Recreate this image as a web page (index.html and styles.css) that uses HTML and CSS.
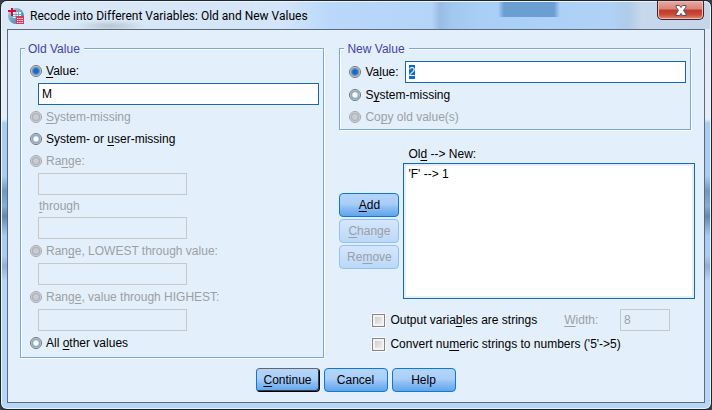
FILE: index.html
```html
<!DOCTYPE html>
<html lang="en">
<head>
<meta charset="utf-8">
<title>Recode into Different Variables: Old and New Values</title>
<link rel="stylesheet" href="styles.css">
</head>
<body>
<main class="window">
  <header class="titlebar">
    <svg class="app-icon" viewBox="0 0 16 16" aria-hidden="true">
      <defs><linearGradient id="globe" x1="0" y1="0" x2="1" y2="1"><stop offset="0" stop-color="#b9d3e8"/><stop offset="1" stop-color="#2f6da8"/></linearGradient></defs>
      <circle cx="8" cy="8" r="8" fill="url(#globe)"/>
      <path d="M5 4h8v6H5z" fill="#eef5fb"/>
      <path d="M5 6.500h8M5 8.500h8M8 4v6M10.500 4v6" stroke="#5f94c4" stroke-width=".8"/>
      <path d="M4 0v8M0 3h8" stroke="#d0103a" stroke-width="2"/>
      <path d="M8 8h8v8H8z" fill="#d03a5c"/>
      <path d="M9 10.500h6M9 12.500h6M9 14.500h6" stroke="#fff" stroke-dasharray="1.300 1"/>
    </svg>
    <h1 class="title">Recode into Different Variables: Old and New Values</h1>
    <button class="close" type="button" aria-label="Close">
      <svg viewBox="0 0 12 11" aria-hidden="true"><path d="M1 .5h3.500L6 2.500 7.500.5H11V2L8.500 5.500 11 9v1.500H7.500L6 8.500l-1.500 2H1V9l2.500-3.500L1 2z" fill="#f8f8f8" stroke="#4d5068"/></svg>
    </button>
  </header>
  <form class="client">
    <div class="columns">
      <fieldset class="group old">
        <legend>Old Value</legend>
        <label class="row"><input type="radio" name="old" checked><span><u>V</u>alue:</span></label>
        <input class="field" type="text" value="M" aria-label="Old value">
        <label class="row off"><input type="radio" name="old" disabled><span><u>S</u>ystem-missing</span></label>
        <label class="row"><input type="radio" name="old"><span>System- or <u>u</u>ser-missing</span></label>
        <label class="row off"><input type="radio" name="old" disabled><span>Ra<u>n</u>ge:</span></label>
        <input class="field short" type="text" disabled aria-label="Range from">
        <label class="through off" for="range-to"><span><u>t</u>hrough</span></label>
        <input class="field short" type="text" id="range-to" disabled>
        <label class="row off"><input type="radio" name="old" disabled><span>Ran<u>g</u>e, LOWEST through value:</span></label>
        <input class="field short" type="text" disabled aria-label="Highest value of range">
        <label class="row off"><input type="radio" name="old" disabled><span>Rang<u>e</u>, value through HIGHEST:</span></label>
        <input class="field short" type="text" disabled aria-label="Lowest value of range">
        <label class="row"><input type="radio" name="old"><span>All <u>o</u>ther values</span></label>
      </fieldset>
      <div class="right">
        <fieldset class="group new">
          <legend>New Value</legend>
          <div class="value-line">
            <label class="row"><input type="radio" name="new" checked><span>Va<u>l</u>ue:</span></label>
            <input class="field selected" type="text" value="2" aria-label="New value" autofocus>
          </div>
          <label class="row"><input type="radio" name="new"><span>S<u>y</u>stem-missing</span></label>
          <label class="row off"><input type="radio" name="new" disabled><span>Co<u>p</u>y old value(s)</span></label>
        </fieldset>
        <div class="mapping">
          <div class="actions">
            <button class="btn" type="button"><span><u>A</u>dd</span></button>
            <button class="btn" type="button" disabled><span><u>C</u>hange</span></button>
            <button class="btn" type="button" disabled><span>Re<u>m</u>ove</span></button>
          </div>
          <div class="list-wrap">
            <label class="list-label" for="map"><span>Ol<u>d</u> --&gt; New:</span></label>
            <select class="list" id="map" size="5"><option>'F' --&gt; 1</option></select>
          </div>
        </div>
        <div class="options">
          <div class="option-line">
            <label class="check"><input type="checkbox"><span>Output varia<u>b</u>les are strings</span></label>
            <label class="width-label off" for="width"><span><u>W</u>idth:</span></label>
            <input class="field width" id="width" type="text" value="8" disabled>
          </div>
          <label class="check"><input type="checkbox"><span>Convert nu<u>m</u>eric strings to numbers ('5'-&gt;5)</span></label>
        </div>
      </div>
    </div>
    <footer class="footer">
      <button class="btn default" type="button"><span><u>C</u>ontinue</span></button>
      <button class="btn" type="button">Cancel</button>
      <button class="btn" type="button">Help</button>
    </footer>
  </form>
</main>
<script src="script.js"></script>
</body>
</html>
```
FILE: styles.css
```css
* { box-sizing: border-box; }

body {
  margin: 0;
  background: #3b3f45;
  color: #000;
  font: 12px/16px "Liberation Sans", Arial, sans-serif;
}

input, button, select { font: inherit; color: inherit; margin: 0; }
u { text-decoration: underline; text-underline-offset: 2px; text-decoration-thickness: 1px; }

.window {
  display: flex;
  flex-direction: column;
  min-height: 100vh;
  padding: 0 6px 6px;
  border: 1px solid #20252c;
  border-radius: 7px;
  background: linear-gradient(#dfe9f5 0, #e6eff9 118px, #a9cdf2 122px, #a9cdf2 175px, #6f98c2 190px, #86add3 205px, #6487ad 215px, #a9cdf2 235px, #a9cdf2 255px, #8fb0d3 265px, #b5d6f7 280px);
  box-shadow: inset 0 0 0 1px #e9f5ff;
}

.titlebar {
  display: flex;
  align-items: center;
  height: 28px;
  margin: 0 -5px;
  padding: 0 6px;
  border-radius: 6px 6px 0 0;
  border-top: 1px solid #e9f5ff;
  background:
    linear-gradient(90deg, transparent 496px, #6b9fd2 502px, #6b9fd2 552px, transparent 558px) 0 0 / 100% 15px no-repeat,
    radial-gradient(ellipse 36px 6px at 108px 24px, #b9c6d0, transparent),
    linear-gradient(90deg, #dce9f7 0, #d3e5f9 280px, #b9d8fa 330px, #b4d4f8 430px, #98bce2 438px, #a3c8f0 450px, #a9cff7 480px, #b0d2f6 610px, #aecbe9 625px, #c7d8ec 640px, #c5d5ea);
}

.app-icon { width: 16px; height: 16px; margin-right: 6px; }
.title { flex: 1; margin: 0; font: 12px/18px Roboto, "Open Sans", sans-serif; }

.close {
  display: grid;
  place-items: center;
  align-self: flex-start;
  width: 47px;
  height: 19px;
  margin-top: -1px;
  padding: 0;
  border: 1px solid #43222a;
  border-top: 0;
  border-radius: 0 0 5px 5px;
  background: linear-gradient(#e9aaa0, #d98379 45%, #bd3a29 50%, #c84a36 75%, #e08a70);
  box-shadow: inset 0 0 0 1px #f0bdb4;
}
.close svg { width: 12px; height: 11px; }

.client {
  flex: 1;
  padding: 13px 9px 9px 12px;
  border: 1px solid #5b6b7b;
  background: #e3effb;
}

.columns { display: grid; grid-template-columns: 304fr 355fr; gap: 15px; }
.right { display: flex; flex-direction: column; }

.group {
  position: relative;
  min-width: 0;
  margin: 5px 0 0;
  padding: 11px 4px 3px 9px;
  border: 1px solid #7aa9d8;
  box-shadow: 1px 1px 0 #fff, inset 1px 1px 0 #fff;
}
.group legend {
  position: absolute;
  top: -8px;
  left: 4px;
  padding: 0 4px 0 3px;
  background: #e3effb;
  color: #4343a8;
}
.new { margin-right: 4px; padding-bottom: 1px; }

.row { display: flex; align-items: center; gap: 4px; height: 22px; }
.off { color: #9c9fa3; }

input[type="radio"] {
  appearance: none;
  width: 12px;
  height: 12px;
  border: 1px solid #6c747a;
  border-radius: 50%;
  background: radial-gradient(circle, #fff 0 2px, #9cc8f0 3px, #8f989f 4px, #e4e8ea 5px);
}
input[type="radio"]:checked { background: radial-gradient(circle, #1668c0 0 2px, #3b8ce0 3px, #8f989f 4px, #e4e8ea 5px); }
input[type="radio"]:disabled { border-color: #a2a5aa; background: radial-gradient(circle, #c9ccd2 0 2px, #bcbfc6 3px, #a9acb2 4px, #e8ebf0 5px); }

.field {
  display: block;
  width: calc(100% - 8px);
  height: 22px;
  margin: 1px 0 1px 8px;
  padding: 0 3px;
  border: 1px solid #1668b4;
  border-radius: 0;
  outline: 0;
  background: #fff;
}
.field:disabled { border-color: #c8c8c8; background: transparent; color: #9c9fa3; }
.short { width: 149px; }
.through { display: flex; align-items: center; height: 20px; padding-left: 9px; }

.value-line { display: flex; align-items: center; height: 24px; gap: 6px; }
.value-line .field { flex: 1; min-width: 0; margin: 0; }
.field::selection { background: #0a6cc8; color: #fff; }

.mapping { display: flex; gap: 4px; margin-top: 16px; }
.actions { display: flex; flex-direction: column; gap: 2px; padding-top: 47px; }
.list-wrap { flex: 1; }
.list-label { display: block; height: 17px; padding-left: 5px; }
.list {
  display: block;
  width: 100%;
  height: 136px;
  padding: 3px 4px;
  border: 1px solid #1668b4;
  border-radius: 0;
  outline: 0;
  background: #fff;
  box-shadow: inset 0 0 0 2px #e3effb;
  overflow: hidden;
}
.list option { padding: 0; min-height: 16px; }

.btn {
  width: 60px;
  height: 24px;
  padding: 0;
  border: 1px solid #0d78d8;
  border-radius: 4px;
  background: linear-gradient(#b5d5fa, #a9cef9 45%, #8abcf2 65%, #62a5ea);
}
.btn:disabled { border-color: #8fc2f0; background: linear-gradient(#d5e6fc, #bbd8f8); color: #9c9fa3; }

.options { padding: 9px 0 0 33px; }
.option-line { display: flex; align-items: center; height: 24px; padding-right: 25px; }
.check { display: flex; align-items: center; gap: 5px; height: 24px; }
input[type="checkbox"] {
  appearance: none;
  width: 13px;
  height: 13px;
  border: 1px solid #858585;
  background: linear-gradient(135deg, #c4c4c4, #f8f8f8);
  box-shadow: inset 0 0 0 2px #f4f4f4, 0 0 0 1px #f8fbff;
}
.width-label { margin-left: 27px; }
.field.width { width: 50px; margin: 0 0 0 auto; }

.footer { display: flex; justify-content: center; gap: 4px; margin-top: 10px; padding-right: 4px; }
.footer .btn { width: 64px; }
.default { border-color: #666 #000 #000 #0d78d8; box-shadow: inset -1px -1px 0 #24405c; }
```
FILE: script.js
```js
document.querySelector(".selected").select();
```
